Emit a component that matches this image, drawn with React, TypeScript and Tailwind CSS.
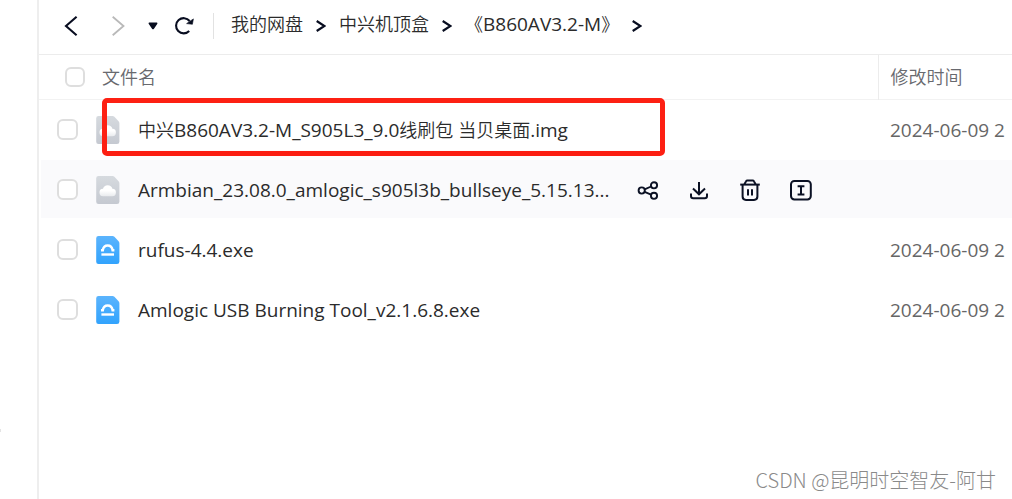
type FileKind = "cloud" | "exe";

interface FileRow {
    name: string;
    kind: FileKind;
    modified: string;
    active?: boolean;
    marked?: boolean;
}

const files: FileRow[] = [
    { name: "中兴B860AV3.2-M_S905L3_9.0线刷包 当贝桌面.img", kind: "cloud", modified: "2024-06-09 2", marked: true },
    { name: "Armbian_23.08.0_amlogic_s905l3b_bullseye_5.15.13...", kind: "cloud", modified: "", active: true },
    { name: "rufus-4.4.exe", kind: "exe", modified: "2024-06-09 2" },
    { name: "Amlogic USB Burning Tool_v2.1.6.8.exe", kind: "exe", modified: "2024-06-09 2" },
];

const crumbs = ["我的网盘", "中兴机顶盒", "《B860AV3.2-M》"];

// Latin runs are set one pixel larger than the Chinese ones so they look even
function MixedText({ text }: { text: string }) {
    return (
        <>
            {text.split(/([\u3000-\u9fff]+)/).map((part, i) =>
                i % 2 ? (
                    <span key={i} className="text-[18px] font-[350]">
                        {part}
                    </span>
                ) : (
                    part
                )
            )}
        </>
    );
}

function FileIcon({ kind }: { kind: FileKind }) {
    return (
        <svg className="h-7 w-6 shrink-0" viewBox="0 0 24 28" aria-hidden="true">
            <defs>
                <linearGradient id="cloudPage" x1="0" y1="0" x2="0" y2="1">
                    <stop offset="0" stopColor="#d6dadf" />
                    <stop offset="1" stopColor="#c5c9d1" />
                </linearGradient>
                <linearGradient id="exePage" x1="0" y1="0" x2="0" y2="1">
                    <stop offset="0" stopColor="#5bb4fd" />
                    <stop offset="1" stopColor="#31a3fd" />
                </linearGradient>
                <linearGradient id="cloudFill" x1="0" y1="0" x2="0" y2="1">
                    <stop offset="0.5" stopColor="#ffffff" />
                    <stop offset="1" stopColor="#e9ebee" />
                </linearGradient>
            </defs>
            <path
                d="M2.5 0H16.5Q17.6 0 18.4 .8L22.6 5.2Q23.4 6 23.4 7.2V25.7Q23.4 28 21 28H2.5Q.2 28 .2 25.7V2.3Q.2 0 2.5 0Z"
                fill={kind === "cloud" ? "url(#cloudPage)" : "url(#exePage)"}
            />
            {kind === "cloud" ? (
                <path
                    d="M7.4 20.2A3.7 3.7 0 0 1 7 12.8A4.85 4.85 0 0 1 16.4 12.8A3.7 3.7 0 0 1 16 20.2Z"
                    fill="url(#cloudFill)"
                />
            ) : (
                <g fill="none" stroke="#fff" strokeWidth="2.4">
                    <path d="M5.4 18.5H18" />
                    <path d="M5 14.2H6.8Q7.5 9.5 11.7 9.5T16.6 14.2H18.4" />
                </g>
            )}
        </svg>
    );
}

function CheckBox({ label, small }: { label: string; small?: boolean }) {
    return (
        <input
            type="checkbox"
            aria-label={label}
            className={`${small ? "size-5" : "size-[21px]"} block shrink-0 appearance-none rounded-[6px] border-2 border-[#dedede] bg-white checked:bg-blue-500`}
        />
    );
}

function Arrow() {
    return (
        <svg className="mt-1 h-3 w-[10px]" viewBox="0 0 10 12" fill="none" stroke="#080d20" strokeWidth="2.2" aria-hidden="true">
            <path d="M.7 1L8.5 6L.7 11" />
        </svg>
    );
}

function RowActions() {
    return (
        <div className="ml-auto flex gap-[27px] pr-[65px] text-[#0b1124]">
            <button type="button" aria-label="分享">
                <svg className="size-6" viewBox="0 0 24 24" fill="none" stroke="currentColor" strokeWidth="1.9">
                    <circle cx="5.7" cy="12.5" r="3.1" />
                    <circle cx="18" cy="7.3" r="3.1" />
                    <circle cx="18" cy="17.8" r="3.1" />
                    <path d="M8.6 11.3L15.1 8.5M8.6 13.8L15.1 16.6" />
                </svg>
            </button>
            <button type="button" aria-label="下载">
                <svg className="size-6" viewBox="0 0 24 24" fill="none" stroke="currentColor" strokeWidth="2">
                    <path d="M12 4V16M6 10.5L12 16.3L18 10.5" />
                    <path d="M4 15.5V18Q4 20.2 6.2 20.2H17.8Q20 20.2 20 18V15.5" />
                </svg>
            </button>
            <button type="button" aria-label="删除">
                <svg className="size-6" viewBox="0 0 24 24" fill="none" stroke="currentColor" strokeWidth="2">
                    <path d="M2.2 6.6H21.8" />
                    <path d="M6.4 6.2L8 3.4Q8.4 2.6 9.4 2.6H14.6Q15.6 2.6 16 3.4L17.6 6.2" />
                    <path d="M4.6 7V18.5Q4.6 21.9 8 21.9H16Q19.4 21.9 19.4 18.5V7" />
                    <path d="M10 11.2V17.5M14 11.2V17.5" />
                </svg>
            </button>
            <button type="button" aria-label="重命名">
                <svg className="size-6" viewBox="0 0 24 24" fill="none" stroke="currentColor" strokeWidth="2">
                    <rect x="2" y="2.9" width="19.8" height="18.6" rx="3.4" />
                    <path d="M8.6 8.2H15.4M8.6 16.6H15.4M12 8.2V16.6" />
                </svg>
            </button>
        </div>
    );
}

function Toolbar() {
    return (
        <header className="flex h-[55px] items-center border-b border-[#ececec] pb-[3px] pl-[25px]">
            <button type="button" aria-label="后退">
                <svg className="h-5 w-[14px]" viewBox="0 0 14 20" fill="none" stroke="#080d20" strokeWidth="2.1">
                    <path d="M12.6 .8L2 10L12.6 19.2" />
                </svg>
            </button>
            <button type="button" aria-label="前进" className="ml-[33px]">
                <svg className="h-5 w-[14px]" viewBox="0 0 14 20" fill="none" stroke="#b9b9b9" strokeWidth="1.8">
                    <path d="M1.7 .8L12.5 10L1.7 19.2" />
                </svg>
            </button>
            <button type="button" aria-label="历史记录" className="ml-[23px]">
                <svg className="h-2 w-[10px]" viewBox="0 0 10 8" fill="#080d20">
                    <path d="M1.2 .6H8.8Q10 .8 9.2 1.9L5.8 6.9Q5 7.8 4.2 6.9L.8 1.9Q0 .8 1.2 .6Z" />
                </svg>
            </button>
            <button type="button" aria-label="刷新" className="ml-4">
                <svg className="size-5" viewBox="0 0 20 20" fill="none" stroke="#080d20" strokeWidth="2.1">
                    <path d="M15.2 15A7.6 7.6 0 1 1 15.6 5" />
                    <path d="M19.4 2.9L18.4 8.3L12.6 7.6L16 5.2Z" fill="#080d20" stroke="#080d20" strokeWidth=".6" />
                </svg>
            </button>
            <div className="ml-[19px] h-[26px] w-px bg-[#e2e2e2]" />
            <nav className="ml-[17px] flex items-center gap-[13px] pb-1 text-[#2b2b2b]">
                {crumbs.map((crumb) => (
                    <div key={crumb} className="flex items-center gap-[13px]">
                        <a href="#" className="whitespace-nowrap">
                            <MixedText text={crumb} />
                        </a>
                        <Arrow />
                    </div>
                ))}
            </nav>
        </header>
    );
}

export default function App() {
    return (
        <div className="relative flex min-h-screen overflow-hidden bg-white font-['Open_Sans','Noto_Sans_CJK_SC',sans-serif] text-[19px] leading-6">
            <aside className="flex w-[39px] shrink-0 flex-col justify-end border-r-2 border-[#eeeeee] pb-[67px]">
                <div className="h-[3px] w-px bg-[#e4e4e4]" />
            </aside>

            <main className="min-w-0 flex-1">
                <Toolbar />
                <table className="w-full table-fixed border-collapse text-left">
                    <thead className="text-[#68696e]">
                        <tr className="h-11 border-b border-[#f2f2f2]">
                            <th className="p-0 font-normal">
                                <div className="flex items-center pl-[26px]">
                                    <CheckBox label="全选" small />
                                    <span className="ml-[17px]">
                                        <MixedText text="文件名" />
                                    </span>
                                </div>
                            </th>
                            <th className="w-[134px] border-l border-[#ececec] p-0 pl-3 font-normal">
                                <MixedText text="修改时间" />
                            </th>
                        </tr>
                    </thead>
                    <tbody>
                        {files.map((file) => (
                            <tr key={file.name} className="h-[60px]">
                                <td className="relative p-0 pl-[2px]">
                                    <div className={`mb-[2px] flex h-[58px] items-center pl-4 pt-[2px] ${file.active ? "bg-[#fafafc]" : ""}`}>
                                        <CheckBox label={file.name} />
                                        <div className="ml-[18px] flex flex-1 items-center gap-[18px]">
                                            <FileIcon kind={file.kind} />
                                            <span className="whitespace-nowrap text-[#2b2b2b]">
                                                <MixedText text={file.name} />
                                            </span>
                                            {file.active && <RowActions />}
                                        </div>
                                    </div>
                                    {file.marked && (
                                        <div className="pointer-events-none absolute -top-[2px] left-[63px] h-[58px] w-[563px] rounded-[5px] border-[5px] border-[#fd2013]" />
                                    )}
                                </td>
                                <td className="p-0">
                                    <div className={`mb-[2px] flex h-[58px] items-center whitespace-nowrap pl-3 pt-[2px] text-[#666] ${file.active ? "bg-[#fafafc]" : ""}`}>
                                        {file.modified}
                                    </div>
                                </td>
                            </tr>
                        ))}
                    </tbody>
                </table>
            </main>

            <p className="absolute bottom-[7px] right-4 font-['Noto_Sans_CJK_SC',sans-serif] text-[20px] font-light text-[#8a8a8a]">
                CSDN @昆明时空智友-阿甘
            </p>
        </div>
    );
}
